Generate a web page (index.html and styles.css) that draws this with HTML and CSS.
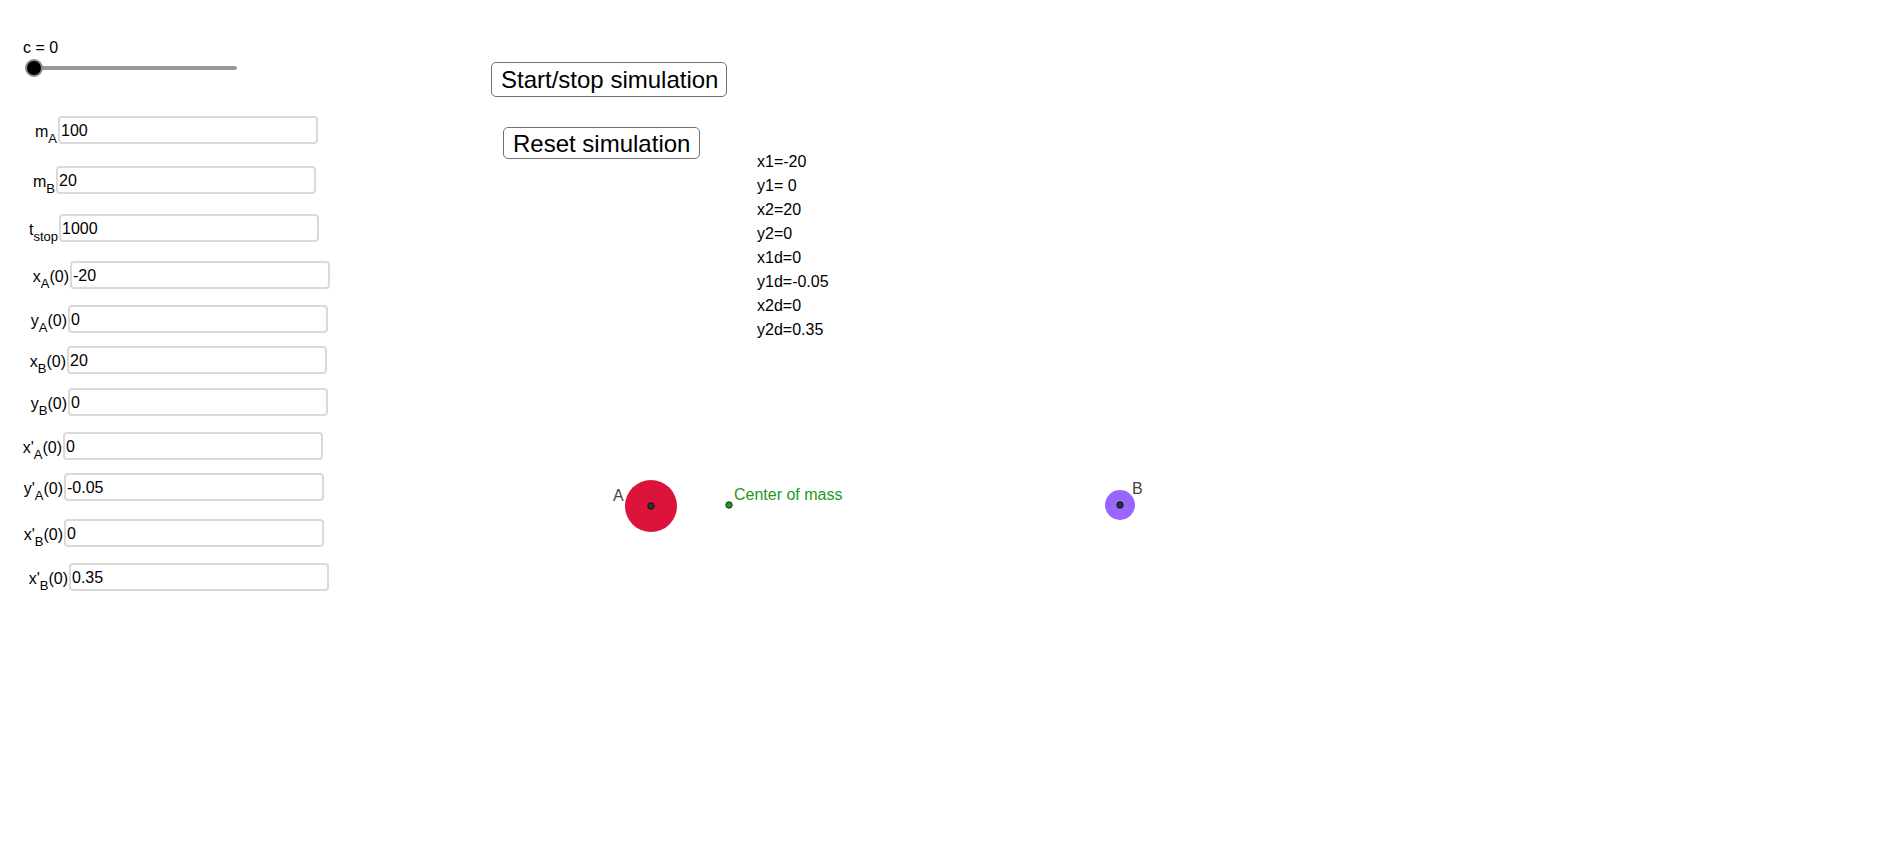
FILE: index.html
```html
<!DOCTYPE html>
<html lang="en">
<head>
<meta charset="utf-8">
<title>Two-body simulation</title>
<link rel="stylesheet" href="styles.css">
</head>
<body>
<div class="applet">
  <svg class="graphics" width="1893" height="848" viewBox="0 0 1893 848" xmlns="http://www.w3.org/2000/svg">
    <circle cx="651" cy="506" r="26" fill="#dc143c"/>
    <circle cx="651" cy="506" r="3.2" fill="#333" stroke="#111" stroke-width="1"/>
    <text class="plabel" x="613" y="501">A</text>
    <circle cx="729" cy="505" r="3.2" fill="#1e9e1e" stroke="#222" stroke-width="1"/>
    <text class="com" x="734" y="500">Center of mass</text>
    <circle cx="1120" cy="505" r="15" fill="#9966ff"/>
    <circle cx="1120" cy="505" r="3.2" fill="#333" stroke="#111" stroke-width="1"/>
    <text class="plabel" x="1132" y="494">B</text>
  </svg>

  <div class="panel">
    <div class="slider">
      <div class="slider-caption">c = 0</div>
      <div class="slider-track"><span class="slider-knob"></span></div>
    </div>

    <div class="row r1"><label class="lbl">m<sub>A</sub></label><input class="field" type="text" value="100"></div>
    <div class="row r2"><label class="lbl">m<sub>B</sub></label><input class="field" type="text" value="20"></div>
    <div class="row r3"><label class="lbl">t<sub>stop</sub></label><input class="field" type="text" value="1000"></div>
    <div class="row r4"><label class="lbl">x<sub>A</sub>(0)</label><input class="field" type="text" value="-20"></div>
    <div class="row r5"><label class="lbl">y<sub>A</sub>(0)</label><input class="field" type="text" value="0"></div>
    <div class="row r6"><label class="lbl">x<sub>B</sub>(0)</label><input class="field" type="text" value="20"></div>
    <div class="row r7"><label class="lbl">y<sub>B</sub>(0)</label><input class="field" type="text" value="0"></div>
    <div class="row r8"><label class="lbl">x'<sub>A</sub>(0)</label><input class="field" type="text" value="0"></div>
    <div class="row r9"><label class="lbl">y'<sub>A</sub>(0)</label><input class="field" type="text" value="-0.05"></div>
    <div class="row r10"><label class="lbl">x'<sub>B</sub>(0)</label><input class="field" type="text" value="0"></div>
    <div class="row r11"><label class="lbl">x'<sub>B</sub>(0)</label><input class="field" type="text" value="0.35"></div>
  </div>

  <div class="btn-col">
    <button class="btn btn-start" type="button">Start/stop simulation</button>
    <button class="btn btn-reset" type="button">Reset simulation</button>
  </div>

  <div class="vars">
    <div class="var">x1=-20</div>
    <div class="var">y1= 0</div>
    <div class="var">x2=20</div>
    <div class="var">y2=0</div>
    <div class="var">x1d=0</div>
    <div class="var">y1d=-0.05</div>
    <div class="var">x2d=0</div>
    <div class="var">y2d=0.35</div>
  </div>
</div>
</body>
</html>
```

FILE: styles.css
```css
html, body {
  margin: 0;
  padding: 0;
  background: #ffffff;
}

body {
  font-family: "Liberation Sans", Arial, sans-serif;
  color: #000;
}

.applet {
  position: relative;
  width: 1893px;
  height: 848px;
  overflow: hidden;
  display: flex;
  align-items: flex-start;
}

.graphics {
  position: absolute;
  left: 0;
  top: 0;
  pointer-events: none;
}

.plabel {
  font-family: "Liberation Sans", Arial, sans-serif;
  font-size: 16px;
  fill: #444;
}

.com {
  font-family: "Liberation Sans", Arial, sans-serif;
  font-size: 16px;
  fill: #1a991a;
}

/* left panel */
.panel {
  position: relative;
  width: 331px;
  flex: none;
  display: flex;
  flex-direction: column;
  align-items: flex-start;
}

.slider {
  margin-top: 39px;
  padding-left: 23px;
  display: flex;
  flex-direction: column;
}

.slider-caption {
  font-size: 16px;
  line-height: 18px;
  height: 18px;
}

.slider-track {
  position: relative;
  margin-top: 9px;
  margin-left: 11px;
  width: 203px;
  height: 4px;
  border-radius: 2px;
  background: #999;
}

.slider-knob {
  position: absolute;
  left: -9px;
  top: -7px;
  width: 18px;
  height: 18px;
  box-sizing: border-box;
  border-radius: 50%;
  background: #000;
  border: 2.5px solid #8c8c8c;
}

.row {
  display: flex;
  align-items: center;
  height: 28px;
}

.lbl {
  width: var(--lw);
  box-sizing: border-box;
  padding-right: 1px;
  text-align: right;
  font-size: 16px;
  line-height: 18px;
  white-space: nowrap;
  position: relative;
  top: 2px;
}

.lbl sub {
  font-size: 13px;
  vertical-align: -6px;
  line-height: 0;
}

.field {
  width: 260px;
  height: 28px;
  box-sizing: border-box;
  margin: 0;
  padding: 2px 2px 0 1px;
  border: 2px solid #dadada;
  border-radius: 4px;
  font-family: "Liberation Sans", Arial, sans-serif;
  font-size: 16px;
  color: #000;
  background: #fff;
  outline: none;
}

.r1 { margin-top: 46px; --lw: 58px; }
.r2 { margin-top: 22px; --lw: 56px; }
.r3 { margin-top: 20px; --lw: 59px; }
.r4 { margin-top: 19px; --lw: 70px; }
.r5 { margin-top: 16px; --lw: 68px; }
.r6 { margin-top: 13px; --lw: 67px; }
.r7 { margin-top: 14px; --lw: 68px; }
.r8 { margin-top: 16px; --lw: 63px; }
.r9 { margin-top: 13px; --lw: 64px; }
.r10 { margin-top: 18px; --lw: 64px; }
.r11 { margin-top: 16px; --lw: 69px; }

/* buttons */
.btn-col {
  position: relative;
  flex: none;
  margin-left: 160px;
  padding-top: 62px;
  display: flex;
  flex-direction: column;
  align-items: flex-start;
}

.btn {
  font-family: "Liberation Sans", Arial, sans-serif;
  font-size: 24px;
  line-height: 27px;
  color: #000;
  background: #fff;
  border: 1px solid #707070;
  border-radius: 5px;
  padding: 0 9px;
  margin: 0;
  box-sizing: border-box;
  white-space: nowrap;
  cursor: pointer;
}

.btn-start {
  height: 35px;
  width: 236px;
}

.btn-reset {
  height: 32px;
  width: 197px;
  margin-top: 30px;
  margin-left: 12px;
}

/* variables list */
.vars {
  position: relative;
  flex: none;
  margin-left: 30px;
  padding-top: 150px;
  display: flex;
  flex-direction: column;
}

.var {
  font-size: 16px;
  line-height: 24px;
  height: 24px;
  white-space: pre;
}
```
